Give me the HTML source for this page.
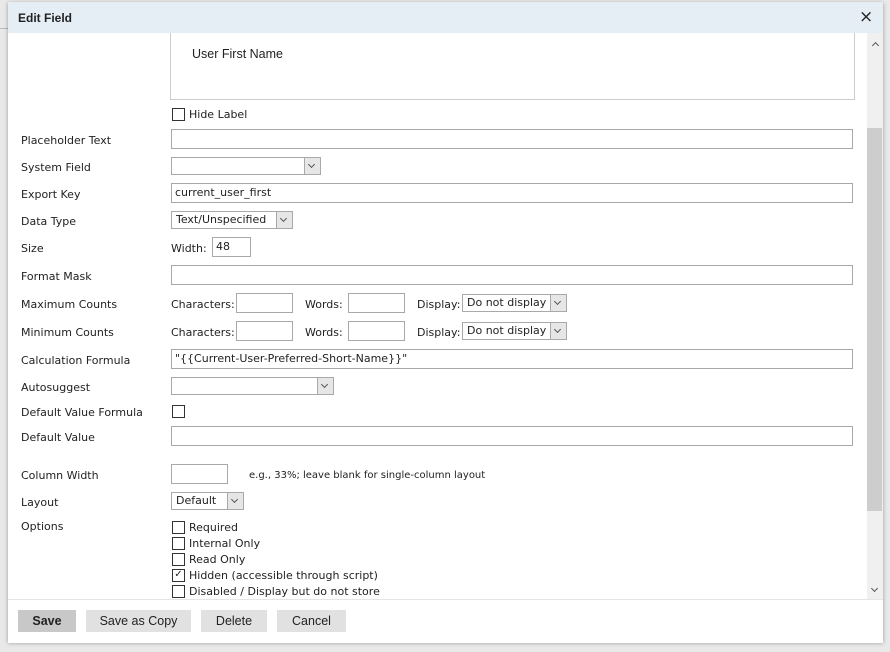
<!DOCTYPE html><html><head><style>
body{margin:0;width:890px;height:652px;background:#e9e9e9;position:relative;overflow:hidden;font-family:"DejaVu Sans","Liberation Sans",sans-serif;font-size:11px;color:#222}
.a{position:absolute;white-space:nowrap}
.dlg{left:8px;top:2px;width:875px;height:640px;background:#fff;box-shadow:0 1px 4px rgba(0,0,0,.35)}
.hd{left:0;top:0;width:875px;height:31px;background:#e6eef5}
.lbl{left:13px}
.in{border:1px solid #a9a9a9;height:18px;box-sizing:border-box;background:#fff;font-size:11px;padding:2px 3px;line-height:14px}
.sel{border:1px solid #a9a9a9;height:18px;box-sizing:border-box;background:#fff;padding:0 4px;line-height:16px}
.sel i{position:absolute;right:0;top:0;width:15px;height:16px;background:#e6e6e6;border-left:1px solid #a9a9a9}
.sel i:after{content:"";position:absolute;left:4px;top:4px;width:4px;height:4px;border-right:1px solid #555;border-bottom:1px solid #555;transform:rotate(45deg)}
.cb{width:11px;height:11px;border:1px solid #333;background:#fff}
.btn{top:608px;height:22px;background:#e1e1e1;text-align:center;line-height:22px;font-family:"Liberation Sans",sans-serif;font-size:12.5px}
</style></head><body>
<div class="a" style="left:0;top:28px;width:8px;height:1px;background:#bbb"></div>
<div class="a dlg">
<div class="a hd"></div>
<div class="a" style="left:10px;top:9px;font-weight:bold;font-size:12px;font-family:'Liberation Sans'">Edit Field</div>
<div class="a" style="left:851px;top:5px;font-size:17px;font-family:'DejaVu Sans'">×</div>
<div class="a" style="left:162px;top:31px;width:683px;height:66px;border:1px solid #ccc;border-top:none"></div>
<div class="a" style="left:184px;top:45px;font-family:'Liberation Sans';font-size:12.5px">User First Name</div>
<div class="a cb" style="left:164px;top:106px"></div><div class="a" style="left:181px;top:106px">Hide Label</div>
<div class="a lbl" style="top:132px">Placeholder Text</div><div class="a in" style="left:163px;top:127px;width:682px;height:20px"></div>
<div class="a lbl" style="top:159px">System Field</div><div class="a sel" style="left:163px;top:155px;width:150px"><i></i></div>
<div class="a lbl" style="top:186px">Export Key</div><div class="a in" style="left:163px;top:181px;width:682px;height:20px">current_user_first</div>
<div class="a lbl" style="top:213px">Data Type</div><div class="a sel" style="left:163px;top:209px;width:122px">Text/Unspecified<i></i></div>
<div class="a lbl" style="top:240px">Size</div><div class="a" style="left:163px;top:240px">Width:</div><div class="a in" style="left:204px;top:235px;width:39px;height:20px">48</div>
<div class="a lbl" style="top:268px">Format Mask</div><div class="a in" style="left:163px;top:263px;width:682px;height:20px"></div>
<div class="a lbl" style="top:296px">Maximum Counts</div>
<div class="a lbl" style="top:324px">Minimum Counts</div>
<div class="a" style="left:163px;top:296px">Characters:</div><div class="a in" style="left:228px;top:291px;width:57px;height:20px"></div>
<div class="a" style="left:297px;top:296px">Words:</div><div class="a in" style="left:340px;top:291px;width:57px;height:20px"></div>
<div class="a" style="left:409px;top:296px">Display:</div><div class="a sel" style="left:454px;top:292px;width:105px;overflow:hidden">Do not display<i></i></div>
<div class="a" style="left:163px;top:324px">Characters:</div><div class="a in" style="left:228px;top:319px;width:57px;height:20px"></div>
<div class="a" style="left:297px;top:324px">Words:</div><div class="a in" style="left:340px;top:319px;width:57px;height:20px"></div>
<div class="a" style="left:409px;top:324px">Display:</div><div class="a sel" style="left:454px;top:320px;width:105px;overflow:hidden">Do not display<i></i></div>
<div class="a lbl" style="top:352px">Calculation Formula</div><div class="a in" style="left:163px;top:347px;width:682px;height:20px">"{{Current-User-Preferred-Short-Name}}"</div>
<div class="a lbl" style="top:379px">Autosuggest</div><div class="a sel" style="left:163px;top:375px;width:163px"><i></i></div>
<div class="a lbl" style="top:404px">Default Value Formula</div><div class="a cb" style="left:164px;top:403px"></div>
<div class="a lbl" style="top:429px">Default Value</div><div class="a in" style="left:163px;top:424px;width:682px;height:20px"></div>
<div class="a lbl" style="top:467px">Column Width</div><div class="a in" style="left:163px;top:462px;width:57px;height:20px"></div>
<div class="a" style="left:241px;top:468px;font-size:10px">e.g., 33%; leave blank for single-column layout</div>
<div class="a lbl" style="top:494px">Layout</div><div class="a sel" style="left:163px;top:490px;width:73px">Default<i></i></div>
<div class="a lbl" style="top:518px">Options</div>
<div class="a cb" style="left:164px;top:519px"></div><div class="a" style="left:181px;top:519px">Required</div>
<div class="a cb" style="left:164px;top:535px"></div><div class="a" style="left:181px;top:535px">Internal Only</div>
<div class="a cb" style="left:164px;top:551px"></div><div class="a" style="left:181px;top:551px">Read Only</div>
<div class="a cb" style="left:164px;top:567px;font-size:10px;line-height:10px;text-align:center">✓</div><div class="a" style="left:181px;top:567px">Hidden (accessible through script)</div>
<div class="a cb" style="left:164px;top:583px"></div><div class="a" style="left:181px;top:583px">Disabled / Display but do not store</div>
<div class="a" style="left:859px;top:31px;width:16px;height:566px;background:#f0f0f0"></div>
<div class="a" style="left:859px;top:126px;width:15px;height:383px;background:#cdcdcd"></div>
<div class="a" style="left:865px;top:41px;width:4px;height:4px;border-left:1px solid #555;border-top:1px solid #555;transform:rotate(45deg)"></div>
<div class="a" style="left:864px;top:584px;width:4px;height:4px;border-right:1px solid #555;border-bottom:1px solid #555;transform:rotate(45deg)"></div>
<div class="a" style="left:0;top:597px;width:875px;height:43px;background:#fff;border-top:1px solid #e5e5e5"></div>
<div class="a btn" style="left:10px;width:58px;background:#c8c8c8;font-weight:bold">Save</div>
<div class="a btn" style="left:78px;width:105px">Save as Copy</div>
<div class="a btn" style="left:193px;width:66px">Delete</div>
<div class="a btn" style="left:269px;width:69px">Cancel</div>
</div>
</body></html>
